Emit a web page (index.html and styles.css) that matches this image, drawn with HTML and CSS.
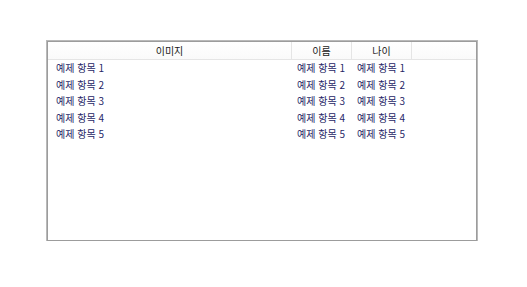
FILE: index.html
```html
<!DOCTYPE html>
<html lang="ko">
<head>
    <meta charset="UTF-8">
    <title>목록 보기</title>
    <link rel="stylesheet" href="styles.css">
</head>
<body>
    <div class="list-view">
        <div class="row header">
            <div class="cell col-image">이미지</div>
            <div class="cell">이름</div>
            <div class="cell">나이</div>
            <div class="cell filler"></div>
        </div>
        <div class="row item">
            <div class="cell col-image">예제 항목 1</div>
            <div class="cell">예제 항목 1</div>
            <div class="cell">예제 항목 1</div>
        </div>
        <div class="row item">
            <div class="cell col-image">예제 항목 2</div>
            <div class="cell">예제 항목 2</div>
            <div class="cell">예제 항목 2</div>
        </div>
        <div class="row item">
            <div class="cell col-image">예제 항목 3</div>
            <div class="cell">예제 항목 3</div>
            <div class="cell">예제 항목 3</div>
        </div>
        <div class="row item">
            <div class="cell col-image">예제 항목 4</div>
            <div class="cell">예제 항목 4</div>
            <div class="cell">예제 항목 4</div>
        </div>
        <div class="row item">
            <div class="cell col-image">예제 항목 5</div>
            <div class="cell">예제 항목 5</div>
            <div class="cell">예제 항목 5</div>
        </div>
    </div>
</body>
</html>
```

FILE: styles.css
```css
body {
    margin: 0;
    padding: 41px 0 0 47px;
    background-color: #ffffff;
    font-family: "Noto Sans CJK KR", "Noto Sans", sans-serif;
    font-size: 10px;
}
.list-view {
    width: 428px;
    height: 198px;
    border: 1px solid #9c9c9c;
    box-shadow: 0 0 0 1px #b9b9b9;
    background-color: #ffffff;
}
.row {
    display: grid;
    grid-template-columns: 244px 60px 60px 1fr;
    align-items: center;
}
.header {
    height: 17px;
    border-bottom: 1px solid #e5e5e5;
    background: linear-gradient(#ffffff, #fafafa);
    color: #1a1a1a;
}
.header .cell {
    text-align: center;
    border-right: 1px solid #e5e5e5;
    height: 17px;
    line-height: 17px;
}
.header .filler {
    border-right: none;
}
.item {
    height: 16.5px;
    line-height: 16.5px;
    color: #262666;
}
.item .cell {
    padding-left: 5px;
    white-space: nowrap;
}
.item .col-image {
    padding-left: 8px;
}
```
